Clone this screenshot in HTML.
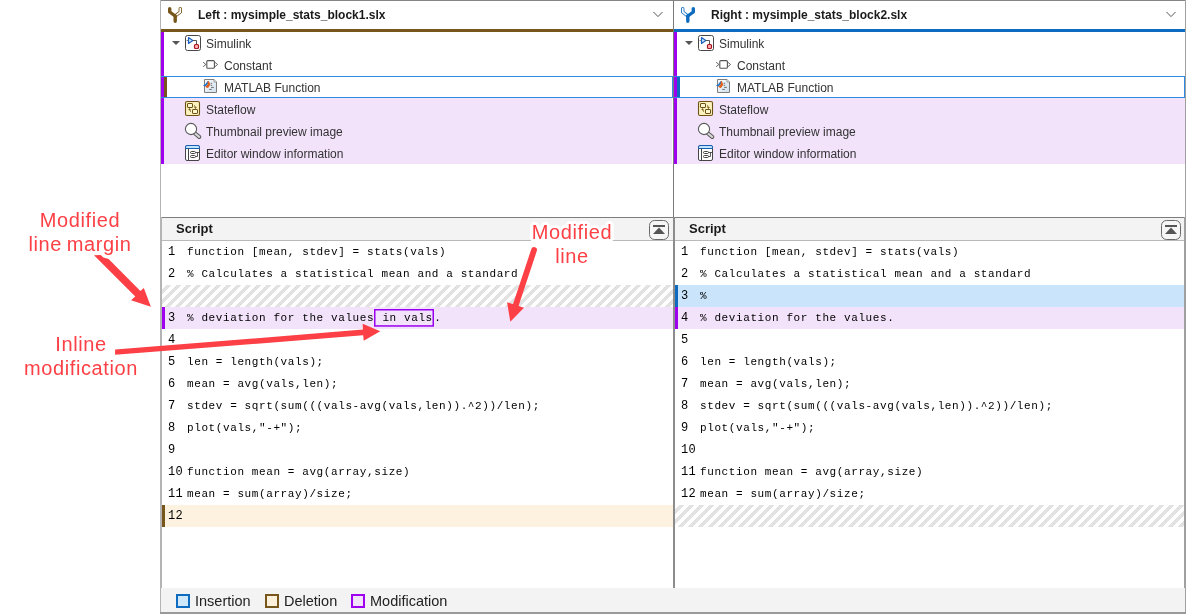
<!DOCTYPE html>
<html><head><meta charset="utf-8">
<style>
html,body{margin:0;padding:0;background:#fff;}
body{will-change:transform;width:1186px;height:614px;position:relative;overflow:hidden;font-family:"Liberation Sans",sans-serif;}
.a{position:absolute;}
.t{position:absolute;margin-top:1px;font-size:12px;color:#333;white-space:pre;line-height:22px;}
.hd{position:absolute;font-weight:bold;font-size:12px;color:#1a1a1a;white-space:pre;line-height:14px;}
.code{position:absolute;font-family:"Liberation Mono",monospace;font-size:11px;letter-spacing:0.6px;color:#000;white-space:pre;line-height:22px;}
.num{font-size:12px;letter-spacing:0.3px;margin-left:1px;}
.hatch{position:absolute;height:22px;background:repeating-linear-gradient(135deg,#fff 0,#fff 3.4px,#e2e2e2 3.4px,#e2e2e2 7.071px);}
.halo{text-shadow:3px 0 #fff,-3px 0 #fff,0 3px #fff,0 -3px #fff,2px 2px #fff,-2px 2px #fff,2px -2px #fff,-2px -2px #fff,3px 1px #fff,-3px 1px #fff,3px -1px #fff,-3px -1px #fff,1px 3px #fff,-1px 3px #fff,1px -3px #fff,-1px -3px #fff;}
.ann{position:absolute;color:#fc4045;font-size:20px;letter-spacing:0.6px;word-spacing:-1.2px;line-height:24px;white-space:pre;text-align:center;}
</style></head><body>

<!-- outer borders -->
<div class="a" style="left:160px;top:0;width:1026px;height:1px;background:#858585"></div>
<div class="a" style="left:160px;top:0;width:1px;height:614px;background:#b4b4b4"></div>
<div class="a" style="left:161px;top:217px;width:1px;height:371px;background:#b4b4b4"></div>
<div class="a" style="left:1185px;top:0;width:1px;height:614px;background:#a0a0a0"></div>
<div class="a" style="left:1184px;top:217px;width:1px;height:371px;background:#a0a0a0"></div>

<!-- header -->
<div class="a" style="left:673px;top:0;width:1px;height:217px;background:#7a7a7a"></div>
<div class="a" style="left:161px;top:29px;width:512px;height:3px;background:#76561b"></div>
<div class="a" style="left:674px;top:29px;width:511px;height:3px;background:#0e6cc0"></div>
<div class="hd" style="left:198px;top:8px">Left : mysimple_stats_block1.slx</div>
<div class="hd" style="left:711px;top:8px">Right : mysimple_stats_block2.slx</div>



<svg class="a" style="left:160px;top:0" width="40" height="30" viewBox="160 0 40 30">
 <path d="M180.3 8.6 V12 L175.2 16" fill="none" stroke="#76561b" stroke-width="3.4" stroke-linecap="round" stroke-linejoin="round"/>
 <path d="M180.3 8.6 V12 L176.8 14.8" fill="none" stroke="#fff" stroke-width="1.7" stroke-linecap="round" stroke-linejoin="round"/>
 <path d="M169.7 8.6 V12 L175.2 16 V21.2" fill="none" stroke="#76561b" stroke-width="3.4" stroke-linecap="round" stroke-linejoin="round"/>
</svg>
<svg class="a" style="left:673px;top:0" width="40" height="30" viewBox="673 0 40 30">
 <path d="M682.7 8.6 V12 L687.8 16" fill="none" stroke="#0e6cc0" stroke-width="3.4" stroke-linecap="round" stroke-linejoin="round"/>
 <path d="M682.7 8.6 V12 L686.2 14.8" fill="none" stroke="#fff" stroke-width="1.7" stroke-linecap="round" stroke-linejoin="round"/>
 <path d="M693.3 8.6 V12 L687.8 16 V21.2" fill="none" stroke="#0e6cc0" stroke-width="3.4" stroke-linecap="round" stroke-linejoin="round"/>
</svg>
<svg class="a" style="left:650px;top:8px" width="16" height="12" viewBox="0 0 16 12"><path d="M3.5 4 L8 8.6 L12.5 4" fill="none" stroke="#555" stroke-width="1"/></svg>
<svg class="a" style="left:1163px;top:8px" width="16" height="12" viewBox="0 0 16 12"><path d="M3.5 4 L8 8.6 L12.5 4" fill="none" stroke="#555" stroke-width="1"/></svg>
<!-- tree left -->
<div class="a" style="left:161px;top:32px;width:3px;height:132px;background:#a000f0"></div>
<div class="a" style="left:164px;top:98px;width:508px;height:66px;background:#f2e3fb"></div>
<div class="a" style="left:161px;top:76px;width:511px;height:1px;background:#2e8ae2"></div>
<div class="a" style="left:161px;top:97px;width:511px;height:1px;background:#2e8ae2"></div>
<div class="a" style="left:672px;top:76px;width:1px;height:22px;background:#2e8ae2"></div>
<div class="a" style="left:164px;top:77px;width:3px;height:20px;background:#76561b"></div>
<svg class="a" style="left:170px;top:38px" width="12" height="8" viewBox="0 0 12 8"><path d="M2 3 H10 L6 7Z" fill="#555"/></svg>
<svg class="a" style="left:184px;top:34px" width="18" height="18" viewBox="0 0 18 18">
 <rect x="1.5" y="1.5" width="15" height="15" rx="2" fill="#fff" stroke="#474747"/>
 <path d="M2.5 6.5 H4.4" stroke="#9a8c80" stroke-width="1"/>
 <path d="M4.5 3.6 L4.5 9.4 L8.8 6.5Z" fill="#cfe6fb" stroke="#1b62c0" stroke-width="1.2" stroke-linejoin="round"/>
 <path d="M8.8 6.5 H12.5 V10.3" fill="none" stroke="#555" stroke-width="1"/>
 <rect x="10.5" y="10.5" width="4" height="4" rx="1" fill="#ffaeb3" stroke="#a8161e" stroke-width="1.2"/>
</svg>
<svg class="a" style="left:202px;top:58px" width="18" height="13" viewBox="0 0 18 13">
 <path d="M1.1 4.2 L3.9 6.5 L1.1 8.7" fill="none" stroke="#555" stroke-width="0.9"/>
 <rect x="4.8" y="2.6" width="7.6" height="7.6" rx="1" fill="#fff" stroke="#555" stroke-width="1.1"/>
 <path d="M12.6 4 L15.6 6.5 L12.6 9" fill="none" stroke="#555" stroke-width="0.9"/>
</svg>
<svg class="a" style="left:202px;top:78px" width="17" height="17" viewBox="0 0 17 17">
 <defs><linearGradient id="dg" x1="0" y1="0" x2="1" y2="1"><stop offset="0" stop-color="#fbfdff"/><stop offset="1" stop-color="#cfdfed"/></linearGradient></defs>
 <path d="M2.5 1.5 H12 L14.5 4 V14.5 H2.5Z" fill="url(#dg)" stroke="#7e7e7e" stroke-width="1"/>
 <path d="M12 1.5 V4 H14.5" fill="#fff" stroke="#8a8a8a" stroke-width="0.9"/>
 <path d="M8.6 5.3 H10.2 M8.6 7.3 H10.2 M9.1 9.4 H11.8 M7.2 11.4 H9.8" stroke="#6e6e6e" stroke-width="1"/>
 <path d="M0.9 7.6 L3.2 6.2 L5.8 3 L7 3.4 L5.6 6.6 L3.3 8.6Z" fill="#2477c8"/>
 <path d="M5.8 3 L7 3.2 L8.2 6.6 L7.8 7.6 L6 9.9 L4.6 9.8 L3.3 8.6 L5.6 6.6Z" fill="#e0621f"/>
</svg>
<svg class="a" style="left:184px;top:100px" width="17" height="17" viewBox="0 0 17 17">
 <rect x="1.5" y="1.5" width="14" height="14" rx="1.6" fill="#fcf2bf" stroke="#6e5212" stroke-width="1.1"/>
 <rect x="3.5" y="3.5" width="5" height="4" rx="0.5" fill="#fdf6d2" stroke="#6e5212" stroke-width="1"/>
 <rect x="8.5" y="9.5" width="5" height="4" rx="0.5" fill="#fdf6d2" stroke="#6e5212" stroke-width="1"/>
 <path d="M10 5.5 Q11.5 6 11.5 8" fill="none" stroke="#6e5212" stroke-width="1"/>
 <path d="M10.5 7.5 L11.5 8.5 L12.5 7.5" fill="none" stroke="#6e5212" stroke-width="0.9"/>
 <path d="M7 11.5 Q5.5 11 5.5 9" fill="none" stroke="#6e5212" stroke-width="1"/>
 <path d="M4.5 9.5 L5.5 8.5 L6.5 9.5" fill="none" stroke="#6e5212" stroke-width="0.9"/>
</svg>
<svg class="a" style="left:183px;top:121px" width="19" height="19" viewBox="0 0 19 19">
 <path d="M11.5 12 L16.2 15.9" stroke="#555" stroke-width="4" stroke-linecap="round"/>
 <path d="M11.5 12 L16.2 15.9" stroke="#d6d6d6" stroke-width="2.2" stroke-linecap="round"/>
 <circle cx="8" cy="8" r="5.6" fill="#fff" stroke="#585858" stroke-width="1.1"/>
</svg>
<svg class="a" style="left:184px;top:144px" width="17" height="18" viewBox="0 0 17 18">
 <rect x="1.5" y="1.5" width="14" height="15" rx="1.5" fill="#fff" stroke="#454545" stroke-width="1"/>
 <path d="M1.5 4.5 V3 Q1.5 1.5 3 1.5 H14 Q15.5 1.5 15.5 3 V4.5Z" fill="#bfe6fd" stroke="#1a5fb4" stroke-width="1"/>
 <path d="M4.5 4.5 V16.5" stroke="#454545" stroke-width="1"/>
 <rect x="6.5" y="7.5" width="5" height="2" rx="1" fill="#fff" stroke="#454545" stroke-width="1"/>
 <rect x="6.5" y="11.5" width="5" height="2" rx="1" fill="#fff" stroke="#454545" stroke-width="1"/>
 <path d="M11.5 8.5 H15.5 M11.5 12.5 H13.5 V8.5" fill="none" stroke="#454545" stroke-width="0.9"/>
</svg>
<div class="t" style="left:206px;top:32px">Simulink</div>
<div class="t" style="left:224px;top:54px">Constant</div>
<div class="t" style="left:224px;top:76px">MATLAB Function</div>
<div class="t" style="left:206px;top:98px">Stateflow</div>
<div class="t" style="left:206px;top:120px">Thumbnail preview image</div>
<div class="t" style="left:206px;top:142px">Editor window information</div>

<!-- tree right -->
<div class="a" style="left:674px;top:32px;width:3px;height:132px;background:#a000f0"></div>
<div class="a" style="left:677px;top:98px;width:508px;height:66px;background:#f2e3fb"></div>
<div class="a" style="left:674px;top:76px;width:511px;height:1px;background:#2e8ae2"></div>
<div class="a" style="left:674px;top:97px;width:511px;height:1px;background:#2e8ae2"></div>
<div class="a" style="left:1184px;top:76px;width:1px;height:22px;background:#2e8ae2"></div>
<div class="a" style="left:677px;top:77px;width:3px;height:20px;background:#0e6cc0"></div>
<div class="a" style="left:513px;top:0">
<svg class="a" style="left:170px;top:38px" width="12" height="8" viewBox="0 0 12 8"><path d="M2 3 H10 L6 7Z" fill="#555"/></svg>
<svg class="a" style="left:184px;top:34px" width="18" height="18" viewBox="0 0 18 18">
 <rect x="1.5" y="1.5" width="15" height="15" rx="2" fill="#fff" stroke="#474747"/>
 <path d="M2.5 6.5 H4.4" stroke="#9a8c80" stroke-width="1"/>
 <path d="M4.5 3.6 L4.5 9.4 L8.8 6.5Z" fill="#cfe6fb" stroke="#1b62c0" stroke-width="1.2" stroke-linejoin="round"/>
 <path d="M8.8 6.5 H12.5 V10.3" fill="none" stroke="#555" stroke-width="1"/>
 <rect x="10.5" y="10.5" width="4" height="4" rx="1" fill="#ffaeb3" stroke="#a8161e" stroke-width="1.2"/>
</svg>
<svg class="a" style="left:202px;top:58px" width="18" height="13" viewBox="0 0 18 13">
 <path d="M1.1 4.2 L3.9 6.5 L1.1 8.7" fill="none" stroke="#555" stroke-width="0.9"/>
 <rect x="4.8" y="2.6" width="7.6" height="7.6" rx="1" fill="#fff" stroke="#555" stroke-width="1.1"/>
 <path d="M12.6 4 L15.6 6.5 L12.6 9" fill="none" stroke="#555" stroke-width="0.9"/>
</svg>
<svg class="a" style="left:202px;top:78px" width="17" height="17" viewBox="0 0 17 17">
 <defs><linearGradient id="dg2" x1="0" y1="0" x2="1" y2="1"><stop offset="0" stop-color="#fbfdff"/><stop offset="1" stop-color="#cfdfed"/></linearGradient></defs>
 <path d="M2.5 1.5 H12 L14.5 4 V14.5 H2.5Z" fill="url(#dg2)" stroke="#7e7e7e" stroke-width="1"/>
 <path d="M12 1.5 V4 H14.5" fill="#fff" stroke="#8a8a8a" stroke-width="0.9"/>
 <path d="M8.6 5.3 H10.2 M8.6 7.3 H10.2 M9.1 9.4 H11.8 M7.2 11.4 H9.8" stroke="#6e6e6e" stroke-width="1"/>
 <path d="M0.9 7.6 L3.2 6.2 L5.8 3 L7 3.4 L5.6 6.6 L3.3 8.6Z" fill="#2477c8"/>
 <path d="M5.8 3 L7 3.2 L8.2 6.6 L7.8 7.6 L6 9.9 L4.6 9.8 L3.3 8.6 L5.6 6.6Z" fill="#e0621f"/>
</svg>
<svg class="a" style="left:184px;top:100px" width="17" height="17" viewBox="0 0 17 17">
 <rect x="1.5" y="1.5" width="14" height="14" rx="1.6" fill="#fcf2bf" stroke="#6e5212" stroke-width="1.1"/>
 <rect x="3.5" y="3.5" width="5" height="4" rx="0.5" fill="#fdf6d2" stroke="#6e5212" stroke-width="1"/>
 <rect x="8.5" y="9.5" width="5" height="4" rx="0.5" fill="#fdf6d2" stroke="#6e5212" stroke-width="1"/>
 <path d="M10 5.5 Q11.5 6 11.5 8" fill="none" stroke="#6e5212" stroke-width="1"/>
 <path d="M10.5 7.5 L11.5 8.5 L12.5 7.5" fill="none" stroke="#6e5212" stroke-width="0.9"/>
 <path d="M7 11.5 Q5.5 11 5.5 9" fill="none" stroke="#6e5212" stroke-width="1"/>
 <path d="M4.5 9.5 L5.5 8.5 L6.5 9.5" fill="none" stroke="#6e5212" stroke-width="0.9"/>
</svg>
<svg class="a" style="left:183px;top:121px" width="19" height="19" viewBox="0 0 19 19">
 <path d="M11.5 12 L16.2 15.9" stroke="#555" stroke-width="4" stroke-linecap="round"/>
 <path d="M11.5 12 L16.2 15.9" stroke="#d6d6d6" stroke-width="2.2" stroke-linecap="round"/>
 <circle cx="8" cy="8" r="5.6" fill="#fff" stroke="#585858" stroke-width="1.1"/>
</svg>
<svg class="a" style="left:184px;top:144px" width="17" height="18" viewBox="0 0 17 18">
 <rect x="1.5" y="1.5" width="14" height="15" rx="1.5" fill="#fff" stroke="#454545" stroke-width="1"/>
 <path d="M1.5 4.5 V3 Q1.5 1.5 3 1.5 H14 Q15.5 1.5 15.5 3 V4.5Z" fill="#bfe6fd" stroke="#1a5fb4" stroke-width="1"/>
 <path d="M4.5 4.5 V16.5" stroke="#454545" stroke-width="1"/>
 <rect x="6.5" y="7.5" width="5" height="2" rx="1" fill="#fff" stroke="#454545" stroke-width="1"/>
 <rect x="6.5" y="11.5" width="5" height="2" rx="1" fill="#fff" stroke="#454545" stroke-width="1"/>
 <path d="M11.5 8.5 H15.5 M11.5 12.5 H13.5 V8.5" fill="none" stroke="#454545" stroke-width="0.9"/>
</svg>
<div class="t" style="left:206px;top:32px">Simulink</div>
<div class="t" style="left:224px;top:54px">Constant</div>
<div class="t" style="left:224px;top:76px">MATLAB Function</div>
<div class="t" style="left:206px;top:98px">Stateflow</div>
<div class="t" style="left:206px;top:120px">Thumbnail preview image</div>
<div class="t" style="left:206px;top:142px">Editor window information</div>
</div>

<!-- script headers -->
<div class="a" style="left:162px;top:217px;width:1022px;height:1px;background:#7d7d7d"></div>
<div class="a" style="left:162px;top:218px;width:1022px;height:22px;background:#f3f3f3"></div>
<div class="a" style="left:162px;top:240px;width:1022px;height:1px;background:#b9b9b9"></div>
<div class="a" style="left:673px;top:217px;width:2px;height:371px;background:#8c8c8c"></div>
<div class="hd" style="left:176px;top:222px;font-size:13px">Script</div>
<div class="hd" style="left:689px;top:222px;font-size:13px">Script</div>
<svg class="a" style="left:649px;top:220px" width="21" height="21" viewBox="0 0 21 21"><rect x="0.5" y="0.5" width="19" height="19" rx="5" fill="#f6f6f6" stroke="#6a6a6a"/><rect x="4" y="5" width="12" height="2" fill="#555"/><path d="M4 14 L10 7.6 L16 14Z" fill="#555"/></svg>
<svg class="a" style="left:1161px;top:220px" width="21" height="21" viewBox="0 0 21 21"><rect x="0.5" y="0.5" width="19" height="19" rx="5" fill="#f6f6f6" stroke="#6a6a6a"/><rect x="4" y="5" width="12" height="2" fill="#555"/><path d="M4 14 L10 7.6 L16 14Z" fill="#555"/></svg>
<!-- code left -->
<div class="code num" style="left:167px;top:241px">1</div>
<div class="code" style="left:187px;top:241px">function [mean, stdev] = stats(vals)</div>
<div class="code num" style="left:167px;top:263px">2</div>
<div class="code" style="left:187px;top:263px">% Calculates a statistical mean and a standard</div>
<div class="hatch" style="left:162px;top:285px;width:511px"></div>
<div class="a" style="left:162px;top:307px;width:511px;height:22px;background:#f2e3fb"></div>
<div class="a" style="left:162px;top:307px;width:3px;height:22px;background:#a000f0"></div>
<div class="code num" style="left:167px;top:307px">3</div>
<div class="code" style="left:187px;top:307px">% deviation for the values</div>
<div class="code" style="left:375.2px;top:307px"> in vals</div>
<div class="code" style="left:434.2px;top:307px">.</div>
<div class="code num" style="left:167px;top:329px">4</div>
<div class="code num" style="left:167px;top:351px">5</div>
<div class="code" style="left:187px;top:351px">len = length(vals);</div>
<div class="code num" style="left:167px;top:373px">6</div>
<div class="code" style="left:187px;top:373px">mean = avg(vals,len);</div>
<div class="code num" style="left:167px;top:395px">7</div>
<div class="code" style="left:187px;top:395px">stdev = sqrt(sum(((vals-avg(vals,len)).^2))/len);</div>
<div class="code num" style="left:167px;top:417px">8</div>
<div class="code" style="left:187px;top:417px">plot(vals,"-+");</div>
<div class="code num" style="left:167px;top:439px">9</div>
<div class="code num" style="left:167px;top:461px">10</div>
<div class="code" style="left:187px;top:461px">function mean = avg(array,size)</div>
<div class="code num" style="left:167px;top:483px">11</div>
<div class="code" style="left:187px;top:483px">mean = sum(array)/size;</div>
<div class="a" style="left:162px;top:505px;width:511px;height:22px;background:#fdf1df"></div>
<div class="a" style="left:162px;top:505px;width:3px;height:22px;background:#76561b"></div>
<div class="code num" style="left:167px;top:505px">12</div>
<!-- code right -->
<div class="code num" style="left:680px;top:241px">1</div>
<div class="code" style="left:700px;top:241px">function [mean, stdev] = stats(vals)</div>
<div class="code num" style="left:680px;top:263px">2</div>
<div class="code" style="left:700px;top:263px">% Calculates a statistical mean and a standard</div>
<div class="a" style="left:675px;top:285px;width:509px;height:22px;background:#c9e4fb"></div>
<div class="a" style="left:675px;top:285px;width:3px;height:22px;background:#0e6cc0"></div>
<div class="code num" style="left:680px;top:285px">3</div>
<div class="code" style="left:700px;top:285px">%</div>
<div class="a" style="left:675px;top:307px;width:509px;height:22px;background:#f2e3fb"></div>
<div class="a" style="left:675px;top:307px;width:3px;height:22px;background:#a000f0"></div>
<div class="code num" style="left:680px;top:307px">4</div>
<div class="code" style="left:700px;top:307px">% deviation for the values.</div>
<div class="code num" style="left:680px;top:329px">5</div>
<div class="code num" style="left:680px;top:351px">6</div>
<div class="code" style="left:700px;top:351px">len = length(vals);</div>
<div class="code num" style="left:680px;top:373px">7</div>
<div class="code" style="left:700px;top:373px">mean = avg(vals,len);</div>
<div class="code num" style="left:680px;top:395px">8</div>
<div class="code" style="left:700px;top:395px">stdev = sqrt(sum(((vals-avg(vals,len)).^2))/len);</div>
<div class="code num" style="left:680px;top:417px">9</div>
<div class="code" style="left:700px;top:417px">plot(vals,"-+");</div>
<div class="code num" style="left:680px;top:439px">10</div>
<div class="code num" style="left:680px;top:461px">11</div>
<div class="code" style="left:700px;top:461px">function mean = avg(array,size)</div>
<div class="code num" style="left:680px;top:483px">12</div>
<div class="code" style="left:700px;top:483px">mean = sum(array)/size;</div>
<div class="hatch" style="left:675px;top:505px;width:509px"></div>

<!-- legend -->
<div class="a" style="left:161px;top:588px;width:1024px;height:25px;background:#f3f3f3"></div>
<div class="a" style="left:160px;top:612px;width:1026px;height:2px;background:#9a9a9a"></div>
<div class="a" style="left:176px;top:594px;width:10px;height:10px;border:2px solid #0e6cc0;background:#cfe8fc"></div>
<div class="a" style="left:195px;top:593px;font-size:14.5px;line-height:16px;color:#222">Insertion</div>
<div class="a" style="left:265px;top:594px;width:10px;height:10px;border:2px solid #76561b;background:#fdf1dc"></div>
<div class="a" style="left:284px;top:593px;font-size:14.5px;line-height:16px;color:#222">Deletion</div>
<div class="a" style="left:351px;top:594px;width:10px;height:10px;border:2px solid #a000f0;background:#f2e3fb"></div>
<div class="a" style="left:370px;top:593px;font-size:14.5px;line-height:16px;color:#222">Modification</div>

<!-- inline modification box -->
<svg class="a" style="left:370px;top:305px" width="70" height="26" viewBox="370 305 70 26"><rect x="374.75" y="309.75" width="58.5" height="16.2" fill="none" stroke="#9a00f0" stroke-width="1.5"/></svg>

<!-- annotations -->
<svg class="a" style="left:0;top:0" width="1186" height="614" viewBox="0 0 1186 614">
 <path d="M94 255.2 L100.7 254.9 L103.4 257.5 L108.6 259.1 L140.4 291.1 L143.8 288 L150.9 306.8 L131 300.2 L135.3 296.5Z" fill="#fc4045"/>
 <path d="M115.1 349.6 L363 329.6 L362.6 323.7 L380.3 331.2 L363.7 340.8 L363.2 335.3 L115.1 354.8Z" fill="#fc4045"/>
 <path d="M534.1 249.9 L515.8 305" stroke="#fc4045" stroke-width="5.8" stroke-linecap="round"/>
 <path d="M507.1 302.3 L524 307.8 L510.3 321.8Z" fill="#fc4045"/>
</svg>
<div class="ann" style="left:0;top:208px;width:160px">Modified
line margin</div>
<div class="ann" style="left:1px;top:332px;width:160px">Inline
modification</div>
<div class="a" style="left:530px;top:229px;width:84px;height:12px;background:#fff;border-radius:0 0 3px 3px"></div>
<div class="ann halo" style="left:492px;top:219.5px;width:160px">Modified
line</div>

</body></html>
